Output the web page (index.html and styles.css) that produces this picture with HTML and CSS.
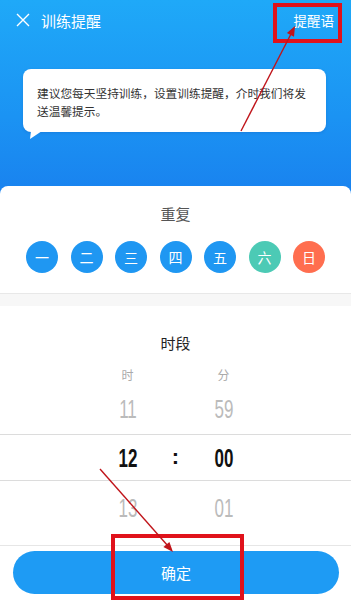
FILE: index.html
```html
<!DOCTYPE html>
<html lang="zh-CN">

<head>
    <meta charset="UTF-8">
    <meta name="viewport" content="width=device-width, initial-scale=1.0">
    <title>训练提醒</title>
    <link rel="stylesheet" href="styles.css">
</head>

<body>
    <div class="page">
        <div class="header">
            <div class="topbar">
                <svg class="close" width="14" height="14" viewBox="0 0 14 14">
                    <path d="M1 1L13 13M13 1L1 13" stroke="#fff" stroke-width="1.4" fill="none" />
                </svg>
                <span class="title">训练提醒</span>
                <span class="tip_link">提醒语</span>
            </div>
            <div class="bubble">
                建议您每天坚持训练，设置训练提醒，介时我们将发<br>送温馨提示。
            </div>
        </div>

        <div class="card">
            <div class="repeat">
                <p class="sec_title">重复</p>
                <div class="days">
                    <span class="day">一</span>
                    <span class="day">二</span>
                    <span class="day">三</span>
                    <span class="day">四</span>
                    <span class="day">五</span>
                    <span class="day sat">六</span>
                    <span class="day sun">日</span>
                </div>
            </div>
            <div class="sep"></div>
            <div class="period">
                <p class="sec_title dark">时段</p>
                <div class="picker_row labels">
                    <span class="col">时</span>
                    <span class="colon"></span>
                    <span class="col">分</span>
                </div>
                <div class="picker_row num">
                    <span class="col">11</span>
                    <span class="colon"></span>
                    <span class="col">59</span>
                </div>
                <div class="picker_row num active">
                    <span class="col">12</span>
                    <span class="colon">:</span>
                    <span class="col">00</span>
                </div>
                <div class="picker_row num last">
                    <span class="col">13</span>
                    <span class="colon"></span>
                    <span class="col">01</span>
                </div>
            </div>
        </div>

        <div class="footer">
            <div class="ok_btn">确定</div>
        </div>

        <svg class="marks" width="351" height="600" viewBox="0 0 351 600">
            <rect x="275" y="5" width="65" height="36" fill="none" stroke="#e0121b" stroke-width="4" />
            <rect x="113" y="536" width="129" height="62" fill="none" stroke="#e0121b" stroke-width="4" />
            <line x1="241" y1="131" x2="292" y2="32" stroke="#c0141a" stroke-width="1.4" />
            <polygon points="295,26 294,36.7 286.9,33.1" fill="#c0141a" />
            <line x1="100" y1="469" x2="168" y2="546" stroke="#c0141a" stroke-width="1.4" />
            <polygon points="173,552 163.4,547.1 169.4,541.9" fill="#c0141a" />
        </svg>
    </div>
</body>

</html>
```

FILE: styles.css
```css
* {
    box-sizing: border-box;
}

body {
    margin: 0;
    font-family: "Noto Sans CJK SC", "Noto Sans", sans-serif;
    background: #fff;
}

p {
    margin: 0;
}

.page {
    position: relative;
    width: 351px;
    height: 600px;
    overflow: hidden;
}

.header {
    height: 194px;
    background: linear-gradient(180deg, #1fa9f8 0%, #1b93f3 60%, #1982ef 100%);
}

.topbar {
    display: flex;
    align-items: center;
    height: 40px;
    padding: 0 17px 0 16px;
    color: #fff;
}

.close {
    margin-right: 11px;
}

.title {
    font-size: 15px;
    flex: 1;
}

.tip_link {
    font-size: 13.5px;
}

.bubble {
    position: relative;
    margin: 29px 25px 0 23px;
    height: 63px;
    background: #fff;
    border-radius: 8px;
    padding: 15px 10px 0 14px;
    font-size: 11.7px;
    line-height: 18px;
    color: #333;
    box-shadow: 0 1px 3px rgba(0, 40, 120, 0.15);
}

.bubble::after {
    content: "";
    position: absolute;
    left: 7px;
    top: 62px;
    width: 12px;
    height: 8px;
    background: #fff;
    clip-path: polygon(1px 0, 12px 0, 0 8px);
}

.card {
    margin-top: -8px;
    background: #fff;
    border-radius: 8px 8px 0 0;
}

.repeat {
    height: 107px;
    padding-top: 19px;
}

.sec_title {
    text-align: center;
    font-size: 15px;
    line-height: 18px;
    color: #555;
}

.sec_title.dark {
    color: #222;
}

.days {
    display: flex;
    justify-content: center;
    gap: 12.5px;
    margin-top: 18px;
}

.day {
    width: 32px;
    height: 32px;
    border-radius: 50%;
    background: #1f97f2;
    color: #fff;
    font-size: 14px;
    display: flex;
    align-items: center;
    justify-content: center;
}

.day.sat {
    background: #4ccab5;
}

.day.sun {
    background: #ff6e4f;
}

.sep {
    height: 13px;
    background: #f7f7f7;
    border-top: 1px solid #e8e8e8;
}

.period {
    padding-top: 28px;
}

.picker_row {
    display: flex;
    justify-content: center;
    align-items: center;
}

.picker_row .col {
    width: 60px;
    text-align: center;
}

.picker_row .colon {
    width: 36px;
    text-align: center;
}

.labels {
    margin-top: 12px;
    height: 20px;
    font-size: 12px;
    color: #aaa;
}

.num {
    height: 50px;
    font-family: "Liberation Sans", sans-serif;
    font-size: 25px;
    color: #bbb;
}

.num .col {
    display: inline-block;
    transform: scaleX(0.68);
}

.num.active {
    height: 47px;
    border-top: 1px solid #dcdcdc;
    border-bottom: 1px solid #dcdcdc;
    color: #111;
    font-weight: bold;
    padding-top: 2px;
}

.num.active .colon {
    font-size: 22px;
    padding-bottom: 3px;
}

.num.last {
    padding-top: 4px;
}

.footer {
    margin-top: 14px;
    border-top: 1px solid #e6e6e6;
    padding: 5px 12px 0 13px;
}

.ok_btn {
    height: 43px;
    border-radius: 22px;
    background: #1e9bf4;
    color: #fff;
    font-size: 15px;
    display: flex;
    align-items: center;
    justify-content: center;
}

.marks {
    position: absolute;
    left: 0;
    top: 0;
    pointer-events: none;
}
```
